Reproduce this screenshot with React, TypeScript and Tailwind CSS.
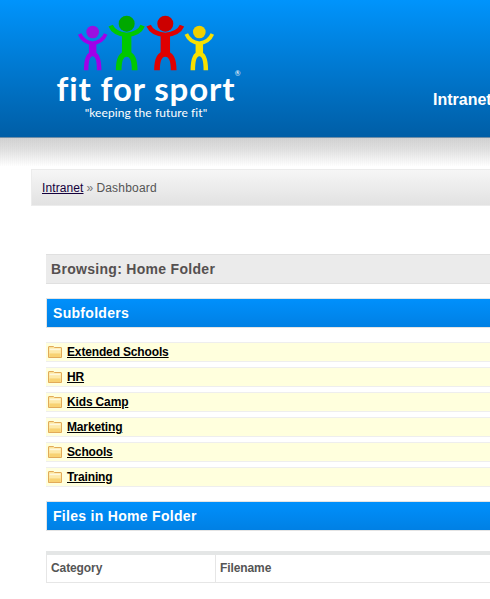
const folders = ["Extended Schools", "HR", "Kids Camp", "Marketing", "Schools", "Training"];

function Figure({ x, top, head, spread, color, headColor }: { x: number; top: number; head: number; spread: number; color: string; headColor: string }) {
  const w = head * 0.62;
  const legTop = 165;
  return (
    <g fill="none" stroke={color} strokeLinejoin="round">
      <circle cx={x} cy={top} r={head} fill={headColor} stroke="none" />
      <path d={`M${x - spread} ${top + 6} Q${x - spread + 10} ${top + 30} ${x} ${top + 34} Q${x + spread - 10} ${top + 30} ${x + spread} ${top + 6}`} strokeWidth={w * 0.95} />
      <path d={`M${x} ${top + 30} L${x} ${legTop}`} strokeWidth={w * 1.9} />
      <path d={`M${x - spread * 0.5} 212 Q${x - spread * 0.5} ${legTop - 2} ${x} ${legTop - 2} Q${x + spread * 0.5} ${legTop - 2} ${x + spread * 0.5} 212`} strokeWidth={w * 1.15} />
    </g>
  );
}

function Logo() {
  return (
    <div className="flex flex-col items-center w-[190px] ml-[51px]">
      <svg viewBox="100 40 440 180" className="w-[146.67px] h-[60px] mt-[13px] shrink-0">
        <Figure x={159} top={97} head={19} spread={39} color="#a000e8" headColor="#9a10e0" />
        <Figure x={261} top={72} head={24} spread={48} color="#00c800" headColor="#00a800" />
        <Figure x={377} top={72} head={24} spread={50} color="#e00000" headColor="#cc0000" />
        <Figure x={479} top={97} head={19} spread={39} color="#f8e000" headColor="#f0d000" />
      </svg>
      <div className="relative text-white font-['Lato',sans-serif] font-bold text-[33px] leading-[32px] tracking-[0.9px] whitespace-nowrap mt-[-1px]">
        fit for sport
        <span className="absolute right-[-5px] top-[-3px] text-[7px] leading-[8px] tracking-normal font-normal">®</span>
      </div>
      <div className="text-white font-['Lato',sans-serif] text-[12px] leading-[13px] tracking-[0.1px] mt-[2px] whitespace-nowrap">"keeping the future fit"</div>
    </div>
  );
}

function Bar({ title }: { title: string }) {
  return (
    <div className="h-[30px] border border-[#e4e4e4] bg-gradient-to-b from-[#0090fc] to-[#0080e4] flex items-center pl-[6px] text-white font-bold text-[14px] tracking-[0.3px]">
      {title}
    </div>
  );
}

export default function App() {
  return (
    <div className="w-[490px] h-[599px] overflow-hidden bg-white font-['Liberation_Sans',Arial,sans-serif]">
      <div className="w-[1000px]">
        <header className="h-[138px] flex border-b border-[#6f8ea8] bg-gradient-to-b from-[#0094fc] to-[#005ea6]">
          <Logo />
          <div className="ml-[192px] mt-[90px] text-white font-bold text-[16px] leading-[20px]">Intranet</div>
        </header>
        <div className="h-[28px] bg-[repeating-linear-gradient(90deg,rgba(0,0,0,0.012)_0_1px,transparent_1px_2px),linear-gradient(to_bottom,#d2d2d2,#e0e0e0_40%,#ffffff)]" />
        <div className="ml-[31px] mt-[3px] h-[37px] border border-[#ececec] bg-gradient-to-b from-[#f6f6f6] to-[#e2e2e2] flex items-center pl-[10px] text-[12px] text-[#555555] tracking-[0.2px]">
          <a href="#" className="text-[#14003c] underline tracking-[0.1px]">Intranet</a>
          <span className="ml-[3px] text-[#777777]">»</span>
          <span className="ml-[3px]">Dashboard</span>
        </div>
        <main className="ml-[46px] mt-[48px]">
          <div className="h-[30px] border-y border-[#e0e0e0] bg-[#ebebeb] flex items-center pl-[5px] text-[14px] font-bold text-[#555050] tracking-[0.3px]">
            Browsing: Home Folder
          </div>
          <div className="mt-[14px]"><Bar title="Subfolders" /></div>
          <ul className="mt-[14px] flex flex-col gap-[5px]">
            {folders.map((name) => (
              <li key={name} className="h-[20px] border-y border-[#eeeeee] bg-[#ffffdd] flex items-center text-[12px] font-bold tracking-[-0.15px]">
                <svg viewBox="0 0 14 12" className="w-[14px] h-[12px] ml-[2px] mr-[5px] shrink-0">
                  <path d="M.5 11.500V1Q.5.5 1 .5H5.500L6.500 1.500H13Q13.500 1.500 13.500 2V11.500Z" fill="#fbe49a" stroke="#e2aa58" />
                  <rect x="1.500" y="2.500" width="11" height="2" fill="#fff8dc" />
                  <rect x="1.500" y="4.500" width="11" height="3" fill="#fde9a8" />
                  <rect x="1.500" y="7.500" width="11" height="3.500" fill="#f8d272" />
                </svg>
                <a href="#" className="text-black underline">{name}</a>
              </li>
            ))}
          </ul>
          <div className="mt-[14px]"><Bar title="Files in Home Folder" /></div>
          <table className="mt-[20px] w-[900px] border-collapse text-[12px] font-bold text-[#555555] tracking-[-0.1px] border-t-[4px] border-[#e4e6e6]">
            <thead>
              <tr className="h-[29px]">
                <th className="w-[169px] border-x-[1px] border-b border-[#e6e6e6] text-left font-bold pl-[4px]">Category</th>
                <th className="border-x-[1px] border-b border-[#e6e6e6] text-left font-bold pl-[4px]">Filename</th>
              </tr>
            </thead>
          </table>
        </main>
      </div>
    </div>
  );
}
